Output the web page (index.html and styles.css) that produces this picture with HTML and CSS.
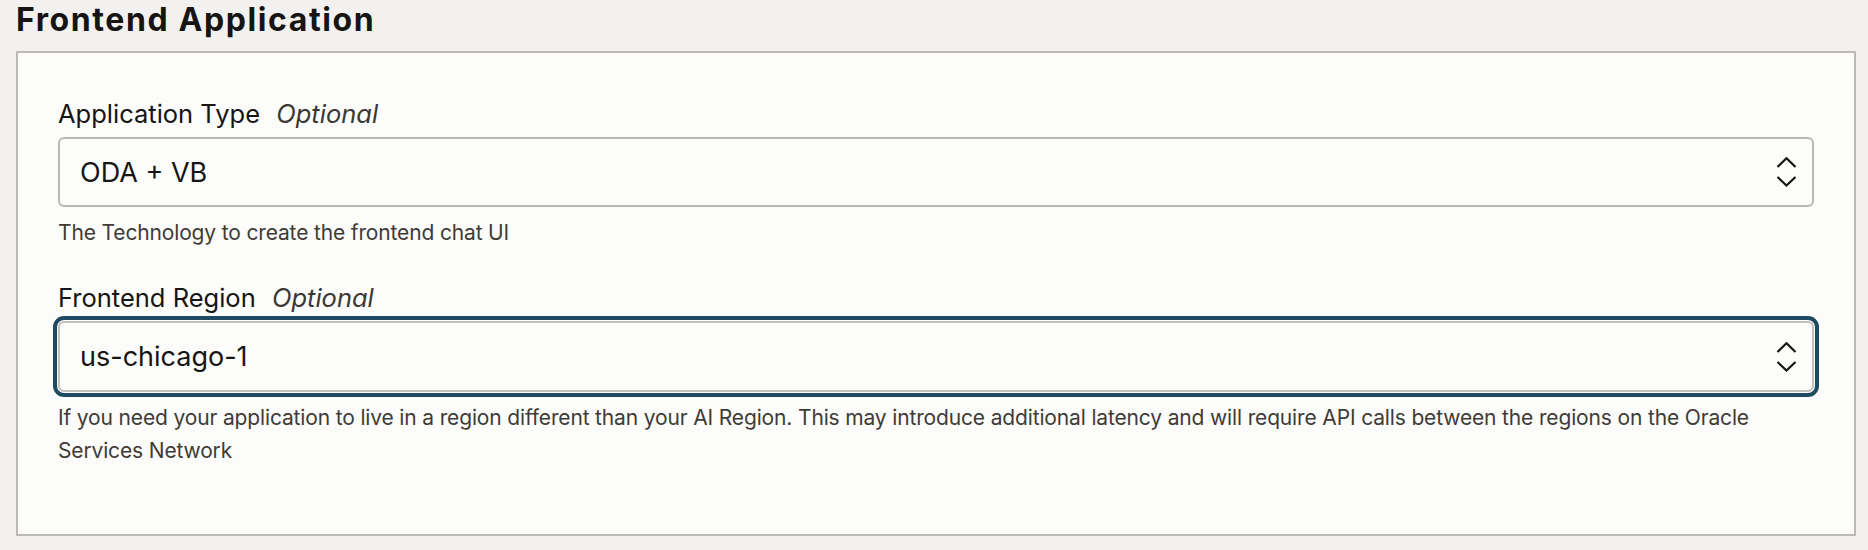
FILE: index.html
```html
<!DOCTYPE html>
<html lang="en">
<head>
<meta charset="utf-8">
<title>Frontend Application</title>
<link rel="stylesheet" href="styles.css">
</head>
<body>
<h2 class="section-title">Frontend Application</h2>
<div class="card">
  <div class="field">
    <div class="label">Application Type <span class="optional">Optional</span></div>
    <div class="select">
      <span class="value">ODA + VB</span>
      <svg class="chevrons" width="21" height="30" viewBox="0 0 21 30"><path d="M1.5 10 L10.5 1.2 L19.5 10 M1.5 20 L10.5 28.5 L19.5 20" fill="none" stroke="#161513" stroke-width="2.2"/></svg>
    </div>
    <div class="help">The Technology to create the frontend chat UI</div>
  </div>
  <div class="field field-2">
    <div class="label">Frontend Region <span class="optional">Optional</span></div>
    <div class="select focused">
      <span class="value">us-chicago-1</span>
      <svg class="chevrons" width="21" height="30" viewBox="0 0 21 30"><path d="M1.5 10 L10.5 1.2 L19.5 10 M1.5 20 L10.5 28.5 L19.5 20" fill="none" stroke="#161513" stroke-width="2.2"/></svg>
    </div>
    <div class="help">If you need your application to live in a region different than your AI Region. This may introduce additional latency and will require API calls between the regions on the Oracle Services Network</div>
  </div>
</div>
</body>
</html>
```
FILE: styles.css
```css
html, body {
  margin: 0;
  padding: 0;
}
body {
  background: #f2f1ef;
  font-family: Inter, "Liberation Sans", Arial, sans-serif;
  color: #161513;
  width: 1868px;
  height: 550px;
  overflow: hidden;
}
.section-title {
  margin: 0 0 11px 0;
  padding-left: 16px;
  font-size: 32px;
  line-height: 40px;
  font-weight: 700;
  letter-spacing: 1.6px;
  color: #161513;
}
.card {
  margin-left: 16px;
  width: 1840px;
  box-sizing: border-box;
  height: 485px;
  border: 2px solid #bdbab5;
  background: #fcfcfb;
  padding: 45px 40px 0 40px;
}
.label {
  font-size: 25.5px;
  line-height: 32px;
  color: #161513;
}
.optional {
  font-style: italic;
  color: #3b3834;
  margin-left: 9px;
}
.select {
  margin-top: 7px;
  height: 70px;
  box-sizing: border-box;
  border: 2px solid #bab6b0;
  border-radius: 6px;
  display: flex;
  align-items: center;
  justify-content: space-between;
  padding-left: 20px;
  padding-right: 15px;
  background: #fcfcfb;
}
.select.focused {
  border-color: #c3c0bb;
  outline: 4px solid #1e4a62;
  outline-offset: 1px;
  height: 71px;
}
.value {
  font-size: 27px;
  color: #161513;
}
.help {
  margin-top: 9px;
  font-size: 21px;
  line-height: 33px;
  letter-spacing: -0.15px;
  color: #3f3b37;
}
.field-2 {
  margin-top: 33px;
}
```
